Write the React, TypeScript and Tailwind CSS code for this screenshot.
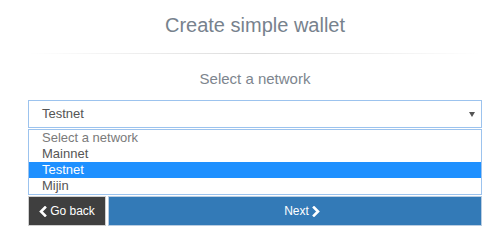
import React from "react";

function ChevronLeft() {
  return (
    <svg width="8" height="11" viewBox="0 0 8 11" className="inline-block">
      <polyline points="6,1.5 2,5.5 6,9.5" fill="none" stroke="white" strokeWidth="2.6" strokeLinecap="square" strokeLinejoin="miter" />
    </svg>
  );
}

function ChevronRight() {
  return (
    <svg width="8" height="11" viewBox="0 0 8 11" className="inline-block">
      <polyline points="2,1.5 6,5.5 2,9.5" fill="none" stroke="white" strokeWidth="2.6" strokeLinecap="square" strokeLinejoin="miter" />
    </svg>
  );
}

export default function App() {
  return (
    <div
      className="w-[503px] h-[236px] bg-white overflow-hidden"
      style={{ fontFamily: '"Liberation Sans", Arial, sans-serif' }}
    >
      <div className="ml-[28px] w-[454px] flex flex-col">
        <div className="mt-[14px] h-[22px] leading-[22px] text-[20px] text-center text-[#77828d]">
          Create simple wallet
        </div>
        <div className="mt-[17px] h-px bg-gradient-to-r from-transparent via-[#dcdcdc] to-transparent" />
        <div className="mt-[16px] h-[18px] leading-[18px] text-[15px] text-center text-[#7d858e]">
          Select a network
        </div>
        <div className="mt-[12px] h-[28px] border border-[#9cc3ee] flex items-center justify-between pl-[13px] pr-[6px]">
          <span className="text-[13px] text-[#555555]">Testnet</span>
          <svg width="6" height="5" viewBox="0 0 6 5">
            <polygon points="0,0 6,0 3,5" fill="#555555" />
          </svg>
        </div>
        <div className="mt-px border border-[#9cc3ee] flex flex-col text-[13px] leading-[16px]">
          <div className="h-[16px] pl-[13px] text-[#7a7a7a]">Select a network</div>
          <div className="h-[16px] pl-[13px] text-[#555555]">Mainnet</div>
          <div className="h-[16px] pl-[13px] bg-[#1e90ff] text-white">Testnet</div>
          <div className="h-[16px] pl-[13px] text-[#555555]">Mijin</div>
        </div>
        <div className="mt-[1px] flex gap-[2px] h-[30px]">
          <div className="w-[78px] bg-[#3f3f3f] border border-[#cfcfcf] flex items-center justify-center gap-[3px] text-white text-[12px]">
            <ChevronLeft />
            <span>Go back</span>
          </div>
          <div className="flex-1 bg-[#337ab7] border border-[#b9cde2] flex items-center justify-center gap-[3px] text-white text-[12px] pl-[14px]">
            <span>Next</span>
            <ChevronRight />
          </div>
        </div>
      </div>
    </div>
  );
}
